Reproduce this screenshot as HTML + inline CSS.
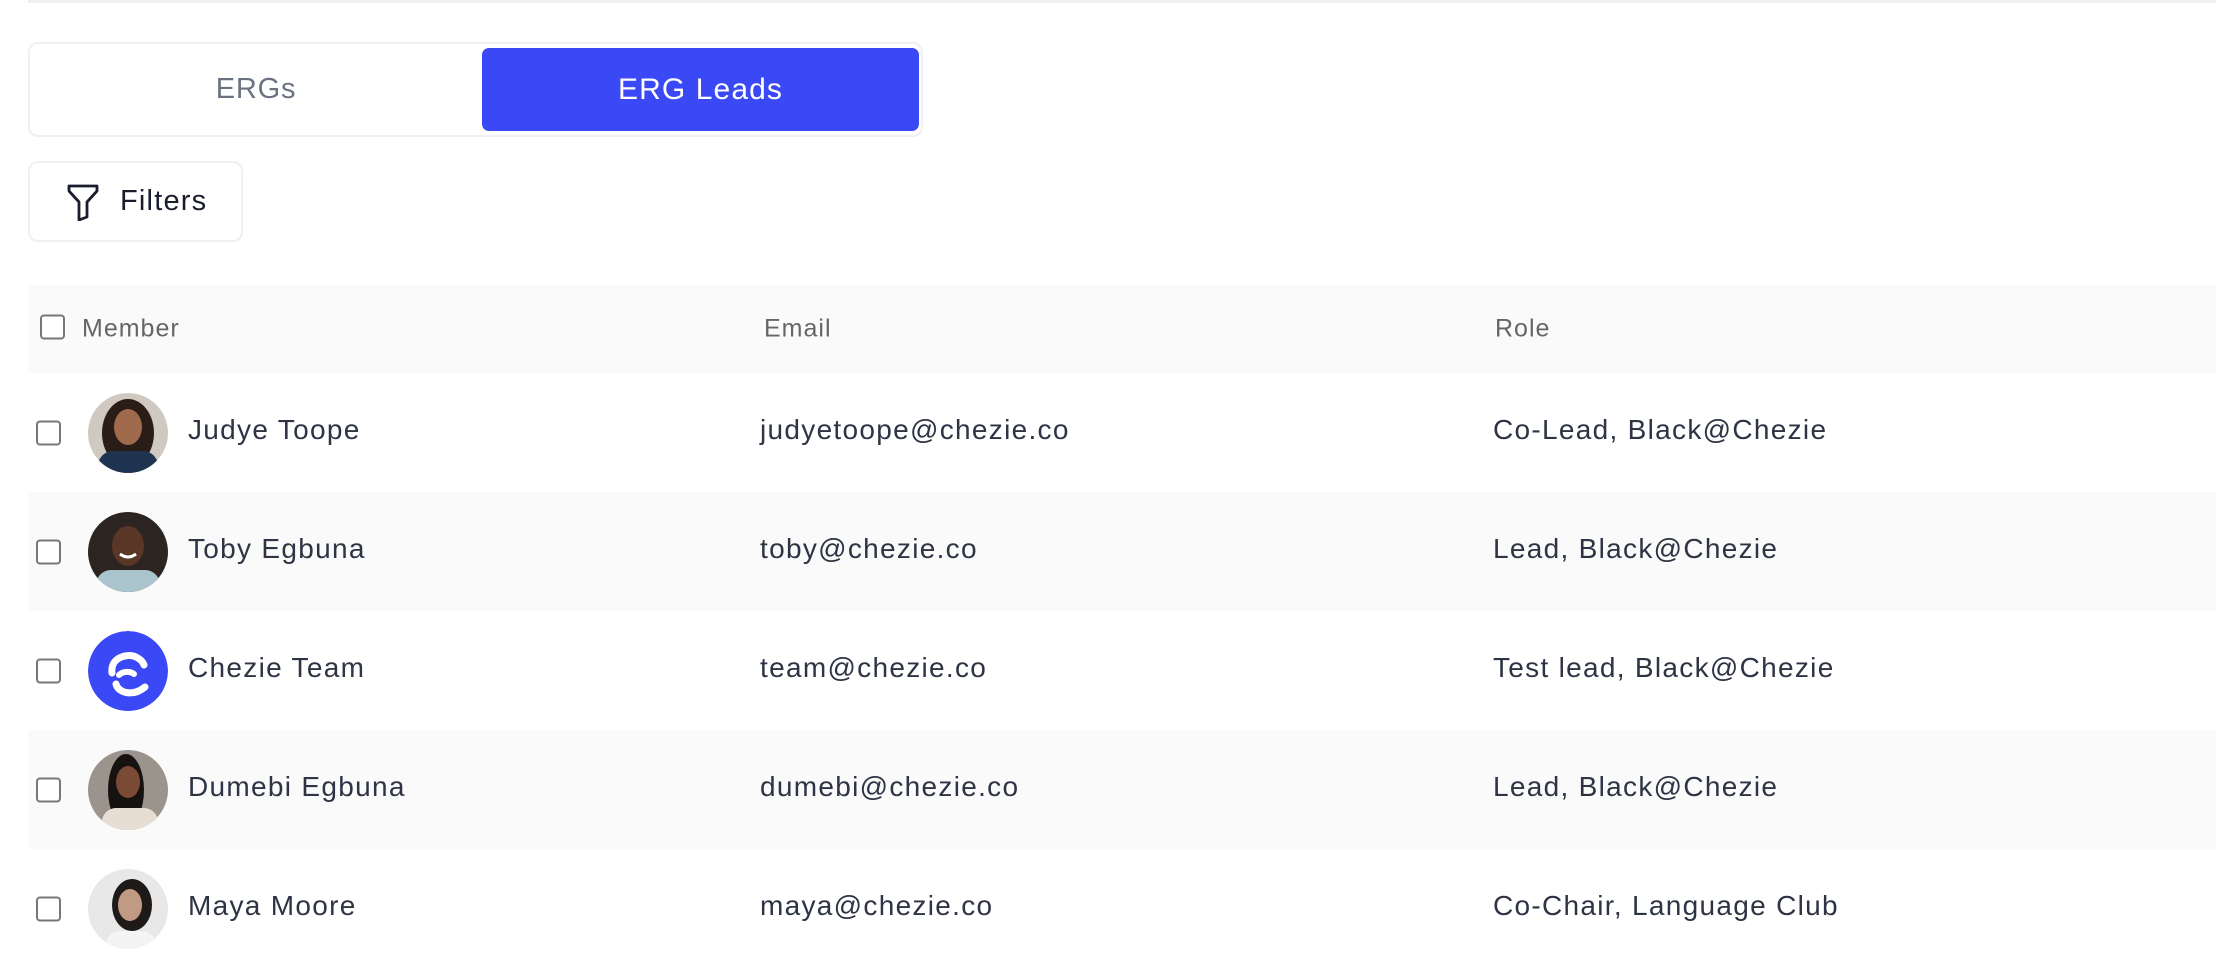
<!DOCTYPE html>
<html><head><meta charset="utf-8"><style>
*{box-sizing:border-box;margin:0;padding:0}
body{width:2216px;height:962px;overflow:hidden;background:#fff;font-family:"Liberation Sans",sans-serif;position:relative}
.topline{position:absolute;left:28px;right:0;top:0;height:3px;background:#eef0f3}
.tabs{position:absolute;left:28px;top:42px;width:895px;height:95px;border:2px solid #eef0f4;border-radius:10px}
.tab1{position:absolute;left:0;top:0;width:452px;height:91px;display:flex;align-items:center;justify-content:center;font-size:29px;color:#6b7383;letter-spacing:0.8px}
.tab2{position:absolute;left:452px;top:4px;width:437px;height:83px;background:#3a48f5;border-radius:7px;display:flex;align-items:center;justify-content:center;font-size:30px;color:#fff;letter-spacing:1.1px}
.filters{position:absolute;left:28px;top:161px;width:215px;height:81px;border:2px solid #eef0f4;border-radius:10px;display:flex;align-items:center;padding-left:36px;font-size:29px;color:#1a1d2e;letter-spacing:1.2px}
.filters svg{margin-right:20px}
.head{position:absolute;left:28px;right:0;top:285px;height:88px;background:#fafafa;font-size:25px;color:#666;letter-spacing:1px}
.head .t{top:50%}
.row{position:absolute;left:28px;right:0;height:119px;font-size:28px;color:#2e3444;letter-spacing:1.3px}
.row.g{background:#fafafa}
.t{position:absolute;top:calc(50% - 3px);transform:translateY(-50%);white-space:nowrap}
.cb{position:absolute;width:25px;height:25px;border:2.5px solid #777;border-radius:4px;top:50%;transform:translateY(-50%);background:#fff}
.av{position:absolute;left:60px;top:20px;width:80px;height:80px;border-radius:50%;overflow:hidden}
</style></head><body>
<div class="topline"></div>
<div class="tabs"><div class="tab1">ERGs</div><div class="tab2">ERG Leads</div></div>
<div class="filters"><svg width="34" height="38" viewBox="0 0 34 38"><path d="M3 3 H31 V8 L21 19 V34 L13 37 V19 L3 8 Z" fill="none" stroke="#1a1d2e" stroke-width="2.8" stroke-linejoin="round"/></svg>Filters</div>
<div class="head">
<div class="cb" style="left:12px;margin-top:-2px"></div>
<div class="t" style="left:54px">Member</div>
<div class="t" style="left:736px">Email</div>
<div class="t" style="left:1467px">Role</div>
</div>

<div class="row" style="top:373px">
<div class="cb" style="left:8px"></div>
<div class="av"><svg width="80" height="80"><rect width="80" height="80" fill="#cfc9c0"/><ellipse cx="40" cy="40" rx="26" ry="34" fill="#2a1d17"/><ellipse cx="40" cy="34" rx="14" ry="18" fill="#a06a4c"/><rect x="10" y="58" width="60" height="30" rx="15" fill="#1f3450"/></svg></div>
<div class="t" style="left:160px">Judye Toope</div>
<div class="t" style="left:732px">judyetoope@chezie.co</div>
<div class="t" style="left:1465px">Co-Lead, Black@Chezie</div>
</div>

<div class="row g" style="top:492px">
<div class="cb" style="left:8px"></div>
<div class="av"><svg width="80" height="80"><rect width="80" height="80" fill="#2b2420"/><ellipse cx="40" cy="34" rx="16" ry="20" fill="#5a3626"/><rect x="8" y="58" width="64" height="30" rx="15" fill="#a9c4cc"/><path d="M32 42 Q40 48 48 42" stroke="#fff" stroke-width="3" fill="none"/></svg></div>
<div class="t" style="left:160px">Toby Egbuna</div>
<div class="t" style="left:732px">toby@chezie.co</div>
<div class="t" style="left:1465px">Lead, Black@Chezie</div>
</div>

<div class="row" style="top:611px">
<div class="cb" style="left:8px"></div>
<div class="av"><svg width="80" height="80" viewBox="0 0 80 80"><circle cx="40" cy="40" r="40" fill="#3a48f5"/><path d="M24 42 C22 26 40 22 48 26 C52 28 55 31 56 34" stroke="#fff" stroke-width="7" fill="none" stroke-linecap="round"/><path d="M31 44 C35 40 42 40 46 43" stroke="#fff" stroke-width="6" fill="none" stroke-linecap="round"/><path d="M28 53 C30 62 45 66 57 56" stroke="#fff" stroke-width="7" fill="none" stroke-linecap="round"/></svg></div>
<div class="t" style="left:160px">Chezie Team</div>
<div class="t" style="left:732px">team@chezie.co</div>
<div class="t" style="left:1465px">Test lead, Black@Chezie</div>
</div>

<div class="row g" style="top:730px">
<div class="cb" style="left:8px"></div>
<div class="av"><svg width="80" height="80"><rect width="80" height="80" fill="#9a948c"/><ellipse cx="38" cy="40" rx="18" ry="36" fill="#161210"/><ellipse cx="40" cy="32" rx="12" ry="16" fill="#7a4a34"/><rect x="14" y="58" width="56" height="30" rx="14" fill="#e8ddd2"/></svg></div>
<div class="t" style="left:160px">Dumebi Egbuna</div>
<div class="t" style="left:732px">dumebi@chezie.co</div>
<div class="t" style="left:1465px">Lead, Black@Chezie</div>
</div>

<div class="row" style="top:849px">
<div class="cb" style="left:8px"></div>
<div class="av"><svg width="80" height="80"><rect width="80" height="80" fill="#e8e8e8"/><ellipse cx="44" cy="36" rx="20" ry="26" fill="#1e1a18"/><ellipse cx="42" cy="36" rx="12" ry="16" fill="#c19a83"/><rect x="18" y="62" width="50" height="30" rx="14" fill="#f4f4f4"/></svg></div>
<div class="t" style="left:160px">Maya Moore</div>
<div class="t" style="left:732px">maya@chezie.co</div>
<div class="t" style="left:1465px">Co-Chair, Language Club</div>
</div>
</body></html>
